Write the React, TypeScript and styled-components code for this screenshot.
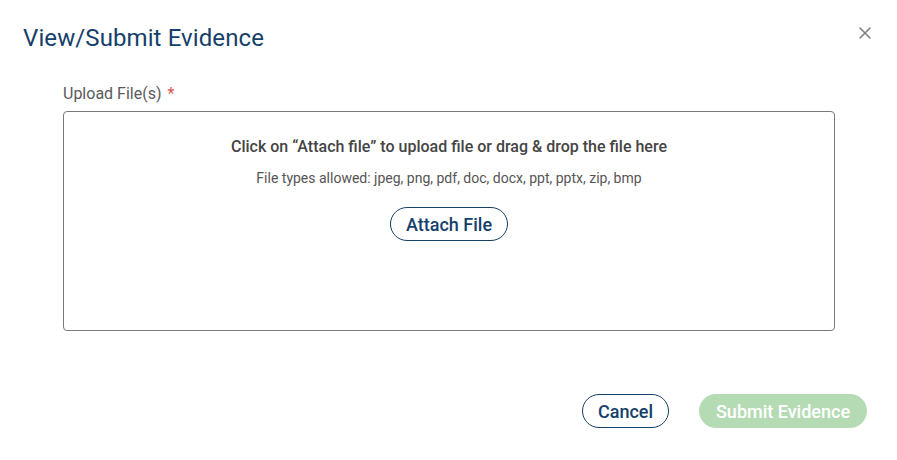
import React from "react";
import styled, { createGlobalStyle } from "styled-components";

const GlobalStyle = createGlobalStyle`
  html, body {
    margin: 0;
    padding: 0;
    background: #fff;
    font-family: Roboto, "Liberation Sans", Arial, sans-serif;
  }
`;

const Dialog = styled.div`
  width: 897px;
  height: 460px;
  box-sizing: border-box;
  display: flex;
  flex-direction: column;
  background: #fff;
`;

const Header = styled.div`
  display: flex;
  align-items: center;
  justify-content: space-between;
  padding: 23px 25px 0 23px;
  height: 30px;
`;

const Title = styled.h2`
  margin: 0;
  font-size: 24px;
  font-weight: 400;
  color: #15406a;
  letter-spacing: 0.1px;
`;

const CloseButton = styled.button`
  border: none;
  background: none;
  padding: 0;
  width: 14px;
  height: 14px;
  cursor: pointer;
  display: flex;
  margin-top: -10px;
`;

const Body = styled.div`
  padding: 24px 62px 0 63px;
  display: flex;
  flex-direction: column;
`;

const Label = styled.label`
  font-size: 16px;
  color: #5a5a5a;
  line-height: 18px;
  margin-top: 8px;
  margin-bottom: 8px;
`;

const Required = styled.span`
  color: #d9534f;
  margin-left: 6px;
`;

const DropZone = styled.div`
  height: 220px;
  box-sizing: border-box;
  border: 1px solid #7a7a7a;
  border-radius: 4px;
  display: flex;
  flex-direction: column;
  align-items: center;
  padding-top: 25px;
`;

const DropTitle = styled.p`
  margin: 0;
  font-size: 16px;
  font-weight: 500;
  color: #444;
  line-height: 20px;
`;

const DropHint = styled.p`
  margin: 12px 0 0;
  font-size: 14px;
  color: #555;
  line-height: 18px;
`;

const OutlineButton = styled.button<{ $width?: number }>`
  height: 34px;
  padding: 0 15px;
  border: 1px solid #15406a;
  border-radius: 17px;
  background: #fff;
  color: #15406a;
  font-family: inherit;
  font-size: 18px;
  font-weight: 500;
  cursor: pointer;
  ${(p) => (p.$width ? `width: ${p.$width}px;` : "")}
`;

const AttachButton = styled(OutlineButton)`
  margin-top: 20px;
`;

const Footer = styled.div`
  margin-top: auto;
  display: flex;
  justify-content: flex-end;
  gap: 30px;
  padding: 0 30px 32px 0;
`;

const PrimaryButton = styled.button<{ $disabled?: boolean }>`
  height: 34px;
  width: 168px;
  border: none;
  border-radius: 17px;
  background: ${(p) => (p.$disabled ? "#b5dbb5" : "#2e8b3a")};
  color: #fff;
  font-family: inherit;
  font-size: 18px;
  font-weight: 500;
  cursor: ${(p) => (p.$disabled ? "default" : "pointer")};
`;

export default function App() {
  return (
    <>
      <GlobalStyle />
      <Dialog>
        <Header>
          <Title>View/Submit Evidence</Title>
          <CloseButton aria-label="Close">
            <svg width="14" height="14" viewBox="0 0 14 14">
              <path
                d="M2 2 L12 12 M12 2 L2 12"
                stroke="#7a7a7a"
                strokeWidth="1.5"
                strokeLinecap="round"
              />
            </svg>
          </CloseButton>
        </Header>
        <Body>
          <Label>
            Upload File(s)<Required>*</Required>
          </Label>
          <DropZone>
            <DropTitle>
              Click on “Attach file” to upload file or drag &amp; drop the file
              here
            </DropTitle>
            <DropHint>
              File types allowed: jpeg, png, pdf, doc, docx, ppt, pptx, zip, bmp
            </DropHint>
            <AttachButton>Attach File</AttachButton>
          </DropZone>
        </Body>
        <Footer>
          <OutlineButton $width={87}>Cancel</OutlineButton>
          <PrimaryButton $disabled disabled>
            Submit Evidence
          </PrimaryButton>
        </Footer>
      </Dialog>
    </>
  );
}
